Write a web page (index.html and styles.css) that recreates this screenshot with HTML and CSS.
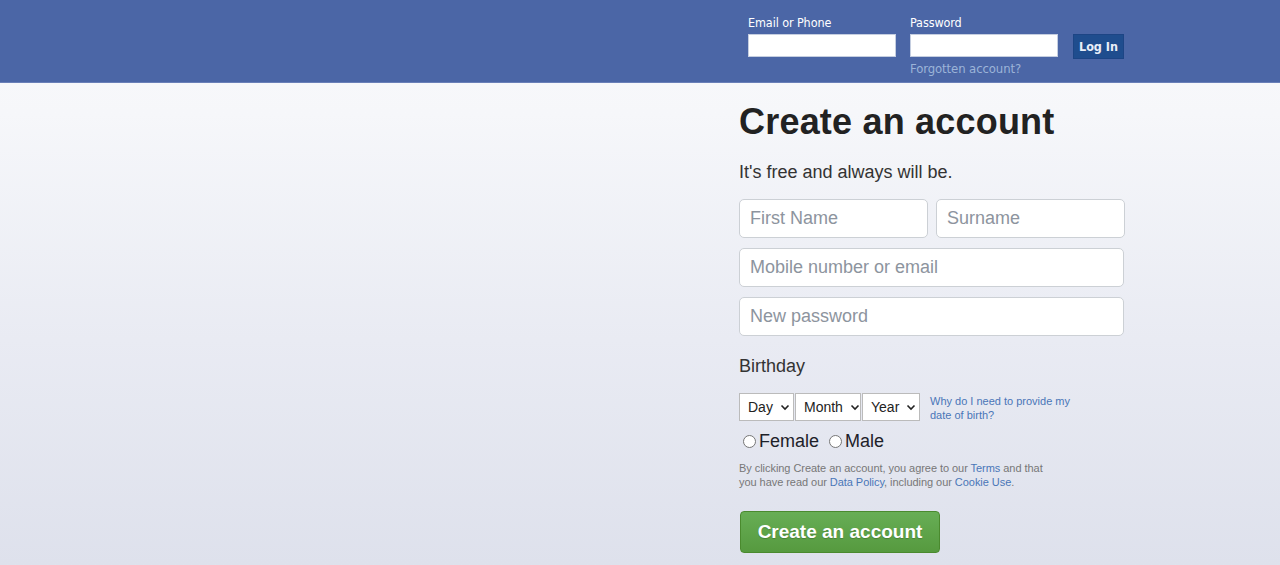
FILE: index.html
```html
<!DOCTYPE html>
<html>
<head>
<meta charset="utf-8">
<link rel="stylesheet" href="styles.css">
</head>
<body>
<header class="topbar">
  <form class="login">
    <div class="login-field">
      <label class="login-label">Email or Phone</label>
      <input class="login-input" type="text">
    </div>
    <div class="login-field">
      <label class="login-label">Password</label>
      <input class="login-input" type="password">
      <a class="forgot" href="#">Forgotten account?</a>
    </div>
    <button class="login-btn" type="button">Log In</button>
  </form>
</header>
<main class="main">
  <section class="signup">
    <h1 class="title">Create an account</h1>
    <p class="subtitle">It's free and always will be.</p>
    <div class="row">
      <input class="field" type="text" placeholder="First Name">
      <input class="field" type="text" placeholder="Surname">
    </div>
    <input class="field full" type="text" placeholder="Mobile number or email">
    <input class="field full" type="password" placeholder="New password">
    <div class="birthday-label">Birthday</div>
    <div class="birthday">
      <div class="selects">
        <div class="select sel-day">Day <span class="chev"><svg width="10" height="7" viewBox="0 0 10 7"><path d="M1.5 1.5 L5 5 L8.5 1.5" fill="none" stroke="#222" stroke-width="1.6"/></svg></span></div>
        <div class="select sel-month">Month <span class="chev"><svg width="10" height="7" viewBox="0 0 10 7"><path d="M1.5 1.5 L5 5 L8.5 1.5" fill="none" stroke="#222" stroke-width="1.6"/></svg></span></div>
        <div class="select sel-year">Year <span class="chev"><svg width="10" height="7" viewBox="0 0 10 7"><path d="M1.5 1.5 L5 5 L8.5 1.5" fill="none" stroke="#222" stroke-width="1.6"/></svg></span></div>
      </div>
      <a class="why" href="#">Why do I need to provide my<br>date of birth?</a>
    </div>
    <div class="gender">
      <label class="radio"><span class="dot"></span>Female</label>
      <label class="radio"><span class="dot"></span>Male</label>
    </div>
    <p class="terms">By clicking Create an account, you agree to our <a href="#">Terms</a> and that<br>you have read our <a href="#">Data Policy</a>, including our <a href="#">Cookie Use</a>.</p>
    <button class="create-btn" type="button">Create an account</button>
  </section>
</main>
</body>
</html>
```
FILE: styles.css
```css
* { box-sizing: border-box; }
html, body { margin: 0; padding: 0; }
body {
  font-family: "Liberation Sans", Arial, sans-serif;
  background: linear-gradient(to bottom, #fafafc 0%, #f6f7fa 20%, #e9ebf3 60%, #dee1ec 100%);
  height: 565px;
  overflow: hidden;
  color: #333;
}
.topbar {
  height: 83px;
  background: #4b66a6;
  border-bottom: 1px solid #6a80b8;
  display: flex;
  justify-content: flex-end;
  padding-right: 156px;
}
.login {
  display: flex;
  align-items: flex-start;
  padding-top: 15px;
}
.login-field {
  display: flex;
  flex-direction: column;
  margin-right: 14px;
}
.login-label {
  color: #fff;
  line-height: 16px;
  height: 19px;
  font-family: "DejaVu Sans Condensed", "Liberation Sans", sans-serif;
  font-size: 12.5px;
  letter-spacing: -0.1px;
}
.login-input {
  width: 148px;
  height: 23px;
  border: 1px solid #c5cee0;
  background: #fff;
  margin: 0;
}
.forgot {
  color: #9cb4d8;
  text-decoration: none;
  font-family: "DejaVu Sans Condensed", "Liberation Sans", sans-serif;
  font-size: 13px;
  margin-top: 4px;
  letter-spacing: -0.1px;
}
.login-btn {
  margin-top: 19px;
  margin-left: 1px;
  width: 51px;
  height: 25px;
  background: #1f4d8e;
  border: 1px solid #1d4585;
  color: #e8eef8;
  font-weight: bold;
  font-family: "DejaVu Sans Condensed", "Liberation Sans", sans-serif;
  font-size: 12.5px;
  padding: 0;
}
.main {
  display: flex;
  justify-content: flex-end;
  padding-right: 156px;
}
.signup {
  width: 385px;
  padding-top: 18px;
}
.title {
  margin: 0;
  font-size: 36px;
  line-height: 42px;
  font-weight: bold;
  color: #222;
  letter-spacing: 0.2px;
}
.subtitle {
  margin: 17px 0 0;
  font-size: 18px;
  line-height: 24px;
  color: #333;
}
.row {
  display: flex;
  gap: 8px;
  margin-top: 15px;
}
.field {
  display: block;
  width: 189px;
  height: 39px;
  border: 1px solid #ccd0d5;
  border-radius: 5px;
  padding: 0 10px;
  font-size: 18px;
  font-family: "Liberation Sans", Arial, sans-serif;
  background: #fff;
  margin: 0;
  outline: none;
}
.field::placeholder { color: #8d949e; }
.field.full {
  width: 385px;
  margin-top: 10px;
}
.birthday-label {
  margin-top: 19px;
  font-size: 18px;
  line-height: 22px;
  color: #333;
}
.birthday {
  display: flex;
  align-items: flex-start;
  margin-top: 16px;
}
.selects { display: flex; }
.select {
  height: 28px;
  border: 1px solid #bbb;
  background: #fff;
  font-size: 14px;
  color: #222;
  display: flex;
  align-items: center;
  padding: 0 0 0 8px;
  margin-right: 1px;
}
.chev {
  display: flex;
  margin-left: 7px;
}
.sel-day { width: 55px; }
.sel-month { width: 66px; }
.sel-year { width: 58px; }
.why {
  margin-left: 9px;
  margin-top: 1px;
  font-size: 11px;
  line-height: 14px;
  color: #4a76b8;
  text-decoration: none;
}
.gender {
  display: flex;
  margin-top: 8px;
  padding-left: 4px;
}
.radio {
  display: flex;
  align-items: center;
  font-size: 18px;
  line-height: 22px;
  color: #1d2129;
  margin-right: 10px;
}
.dot {
  width: 13px;
  height: 13px;
  border: 1px solid #767676;
  border-radius: 50%;
  background: #fff;
  margin-right: 3px;
}
.terms {
  margin: 9px 0 0;
  font-size: 11px;
  line-height: 14px;
  color: #777;
  letter-spacing: -0.05px;
}
.terms a { color: #4a76b8; text-decoration: none; }
.create-btn {
  display: block;
  margin-top: 22px;
  margin-left: 1px;
  width: 200px;
  height: 42px;
  border: 1px solid #4a8a2e;
  border-radius: 4px;
  background: linear-gradient(to bottom, #67ae55, #569a3f);
  color: #fff;
  font-weight: bold;
  font-size: 19px;
  font-family: "Liberation Sans", Arial, sans-serif;
  text-shadow: 0 1px 1px rgba(0,0,0,0.2);
}
```
